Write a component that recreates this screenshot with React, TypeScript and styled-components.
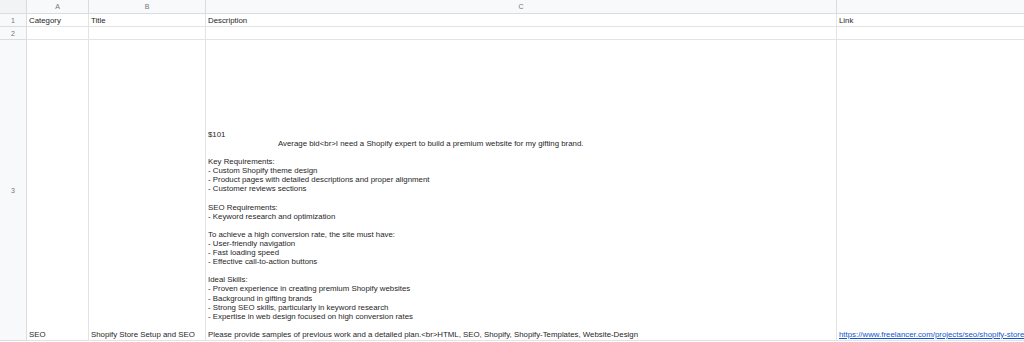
import styled, { createGlobalStyle } from "styled-components";

const GlobalStyle = createGlobalStyle`
  html, body {
    margin: 0;
    padding: 0;
    background: #ffffff;
    overflow: hidden;
  }
  body {
    font-family: "Liberation Sans", Arial, sans-serif;
  }
`;

const Sheet = styled.div`
  display: grid;
  grid-template-columns: 27px 62px 117px 631px 400px;
  grid-template-rows: 14px 13px 13px 301px;
  width: 1024px;
  height: 342px;
  overflow: hidden;
  background: #ffffff;
`;

const HeaderCell = styled.div<{ $corner?: boolean }>`
  box-sizing: border-box;
  background: #f8f9fa;
  border-right: 1px solid #dadce0;
  border-bottom: 1px solid #dadce0;
  display: flex;
  align-items: center;
  justify-content: center;
  font-size: 7px;
  color: #70757a;
  ${({ $corner }) => $corner && "background: #f1f3f4;"}
`;

const RowHeader = styled(HeaderCell)`
  font-size: 7px;
`;

const Cell = styled.div`
  box-sizing: border-box;
  border-right: 1px solid #e2e3e3;
  border-bottom: 1px solid #e2e3e3;
  display: flex;
  flex-direction: column;
  justify-content: flex-end;
  padding: 0 2px 1px 2px;
  font-size: 7.85px;
  line-height: 9.1px;
  color: #1f1f1f;
  white-space: nowrap;
  overflow: hidden;
`;

const Line = styled.div<{ $indent?: number }>`
  min-height: 9.1px;
  padding-left: ${({ $indent }) => $indent || 0}px;
`;

const LinkText = styled.span`
  color: #1155cc;
  text-decoration: underline;
`;

const columns = ["A", "B", "C", "D"];

const description: { text: string; indent?: number }[] = [
  { text: "$101" },
  {
    text: "Average bid<br>I need a Shopify expert to build a premium website for my gifting brand.",
    indent: 70,
  },
  { text: "" },
  { text: "Key Requirements:" },
  { text: "- Custom Shopify theme design" },
  { text: "- Product pages with detailed descriptions and proper alignment" },
  { text: "- Customer reviews sections" },
  { text: "" },
  { text: "SEO Requirements:" },
  { text: "- Keyword research and optimization" },
  { text: "" },
  { text: "To achieve a high conversion rate, the site must have:" },
  { text: "- User-friendly navigation" },
  { text: "- Fast loading speed" },
  { text: "- Effective call-to-action buttons" },
  { text: "" },
  { text: "Ideal Skills:" },
  { text: "- Proven experience in creating premium Shopify websites" },
  { text: "- Background in gifting brands" },
  { text: "- Strong SEO skills, particularly in keyword research" },
  { text: "- Expertise in web design focused on high conversion rates" },
  { text: "" },
  {
    text: "Please provide samples of previous work and a detailed plan.<br>HTML, SEO, Shopify, Shopify-Templates, Website-Design",
  },
];

export default function App() {
  return (
    <>
      <GlobalStyle />
      <Sheet>
        <HeaderCell $corner />
        {columns.map((c) => (
          <HeaderCell key={c}>{c}</HeaderCell>
        ))}

        <RowHeader>1</RowHeader>
        <Cell>Category</Cell>
        <Cell>Title</Cell>
        <Cell>Description</Cell>
        <Cell>Link</Cell>

        <RowHeader>2</RowHeader>
        <Cell />
        <Cell />
        <Cell />
        <Cell />

        <RowHeader>3</RowHeader>
        <Cell>SEO</Cell>
        <Cell>Shopify Store Setup and SEO</Cell>
        <Cell>
          {description.map((l, i) => (
            <Line key={i} $indent={l.indent}>
              {l.text}
            </Line>
          ))}
        </Cell>
        <Cell>
          <LinkText>https://www.freelancer.com/projects/seo/shopify-store</LinkText>
        </Cell>
      </Sheet>
    </>
  );
}
